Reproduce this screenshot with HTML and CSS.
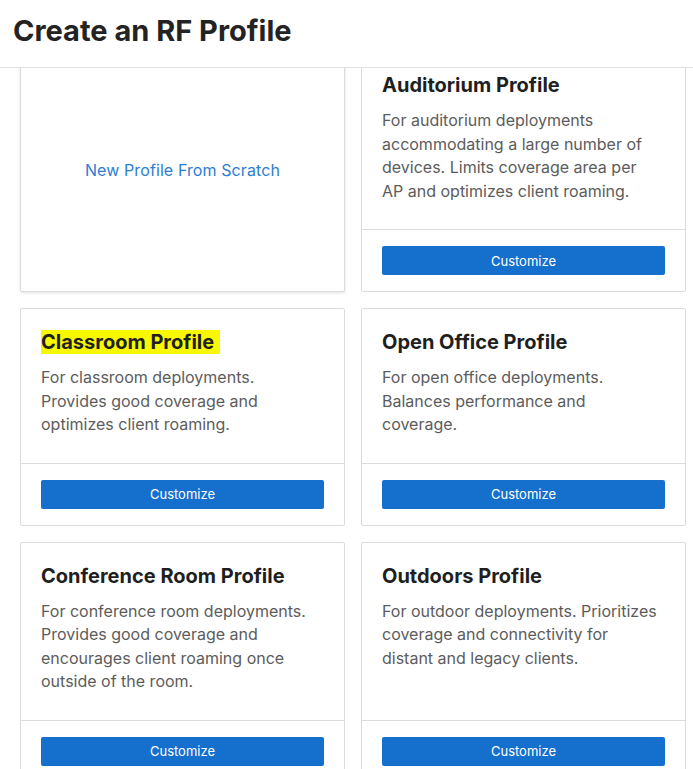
FILE: index.html
```html
<!DOCTYPE html>
<html lang="en">
<head>
<meta charset="utf-8">
<title>Create an RF Profile</title>
<link rel="stylesheet" href="styles.css">
</head>
<body>
<header class="page-header">
  <h1 class="page-title">Create an RF Profile</h1>
</header>
<main class="content">
  <div class="grid">
    <div class="card card-new">
      <a class="new-link" href="#">New Profile From Scratch</a>
    </div>
    <div class="card">
      <div class="card-body">
        <h2 class="card-title">Auditorium Profile</h2>
        <p class="card-desc">For auditorium deployments accommodating a large number of devices. Limits coverage area per<br>AP and optimizes client roaming.</p>
      </div>
      <div class="card-footer"><button class="btn">Customize</button></div>
    </div>
    <div class="card">
      <div class="card-body">
        <h2 class="card-title"><span class="highlight">Classroom Profile</span></h2>
        <p class="card-desc">For classroom deployments. Provides good coverage and optimizes client roaming.</p>
      </div>
      <div class="card-footer"><button class="btn">Customize</button></div>
    </div>
    <div class="card">
      <div class="card-body">
        <h2 class="card-title">Open Office Profile</h2>
        <p class="card-desc">For open office deployments. Balances performance and coverage.</p>
      </div>
      <div class="card-footer"><button class="btn">Customize</button></div>
    </div>
    <div class="card">
      <div class="card-body">
        <h2 class="card-title">Conference Room Profile</h2>
        <p class="card-desc">For conference room deployments. Provides good coverage and encourages client roaming once outside of the room.</p>
      </div>
      <div class="card-footer"><button class="btn">Customize</button></div>
    </div>
    <div class="card">
      <div class="card-body">
        <h2 class="card-title">Outdoors Profile</h2>
        <p class="card-desc">For outdoor deployments. Prioritizes coverage and connectivity for<br>distant and legacy clients.</p>
      </div>
      <div class="card-footer"><button class="btn">Customize</button></div>
    </div>
  </div>
</main>
</body>
</html>
```

FILE: styles.css
```css
* { box-sizing: border-box; }

html, body {
  margin: 0;
  padding: 0;
  background: #ffffff;
  font-family: Inter, "Noto Sans", sans-serif;
  overflow: hidden;
}

.page-header {
  position: fixed;
  top: 0;
  left: 0;
  right: 0;
  height: 68px;
  background: #ffffff;
  border-bottom: 1px solid #e0e0e0;
  z-index: 10;
  display: flex;
  align-items: center;
  padding: 0 12px 6px 13px;
}

.page-title {
  margin: 0;
  font-size: 29px;
  font-weight: 700;
  color: #232323;
  letter-spacing: 0;
}

.content {
  padding: 51px 0 0 20px;
}

.grid {
  display: grid;
  grid-template-columns: 325px 325px;
  column-gap: 16px;
  row-gap: 16px;
}

.card {
  border: 1px solid #dcdcdc;
  border-radius: 2px;
  background: #ffffff;
  display: flex;
  flex-direction: column;
}

.card-new {
  align-items: center;
  justify-content: center;
  padding-bottom: 3px;
  box-shadow: 0 1px 3px rgba(0, 0, 0, 0.12);
}

.new-link {
  color: #2d7dd2;
  font-size: 16px;
  letter-spacing: 0.1px;
  text-decoration: none;
  line-height: 24px;
}

.card-body {
  flex: 1;
  padding: 19px 20px 26px;
}

.card-title {
  margin: 0 0 10px;
  font-size: 20px;
  line-height: 28px;
  font-weight: 700;
  color: #1f1f1f;
  letter-spacing: 0;
}

.highlight {
  background: #f8f800;
  padding: 0 6px 0 0;
}

.card-desc {
  margin: 0;
  font-size: 16px;
  line-height: 23.5px;
  color: #5c5c5c;
}

.card-footer {
  border-top: 1px solid #dcdcdc;
  padding: 16px 20px;
}

.btn {
  display: block;
  width: 100%;
  height: 29px;
  border: none;
  border-radius: 2px;
  background: #1570cd;
  color: #ffffff;
  font-family: Inter, "Noto Sans", sans-serif;
  font-size: 13px;
  cursor: pointer;
}
```
